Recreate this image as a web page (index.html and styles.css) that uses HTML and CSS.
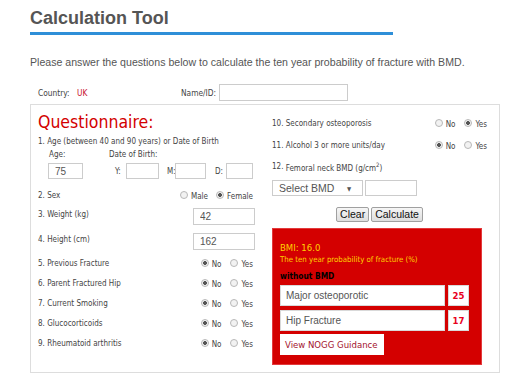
FILE: index.html
```html
<!DOCTYPE html>
<html lang="en">
<head>
    <meta charset="UTF-8">
    <meta name="viewport" content="width=device-width, initial-scale=1.0">
    <title>Calculation Tool</title>
    <link rel="stylesheet" href="styles.css">
</head>
<body>
    <div class="page">
        <h1 class="title">Calculation Tool</h1>
        <p class="intro">Please answer the questions below to calculate the ten year probability of fracture with BMD.</p>

        <div class="country-row">
            <div class="country">Country: <span class="country-name">UK</span></div>
            <label class="name-label" for="nameId">Name/ID:</label>
            <input type="text" id="nameId" class="inp name-input">
        </div>

        <div class="form-box">
            <div class="col-left">
                <h2 class="questionnaire">Questionnaire:</h2>
                <div class="q-age">1. Age (between 40 and 90 years) or Date of Birth</div>
                <div class="dob-labels">
                    <span class="age-lbl">Age:</span>
                    <span>Date of Birth:</span>
                </div>
                <div class="dob-inputs">
                    <input class="inp inp-age" value="75">
                    <span class="dob-l dob-y">Y:</span><input class="inp inp-y">
                    <span class="dob-l dob-m">M:</span><input class="inp inp-m">
                    <span class="dob-l dob-d">D:</span><input class="inp inp-d">
                </div>

                <div class="q-row q-sex">
                    <span>2. Sex</span>
                    <span class="radios sex">
                        <label class="radio"><input type="radio" name="sex">Male</label>
                        <label class="radio"><input type="radio" name="sex" checked>Female</label>
                    </span>
                </div>
                <div class="q-row q-field q-weight">
                    <span class="q-label">3. Weight (kg)</span>
                    <input class="inp inp-num" value="42">
                </div>
                <div class="q-row q-field q-height">
                    <span class="q-label">4. Height (cm)</span>
                    <input class="inp inp-num" value="162">
                </div>
                <div class="q-row">
                    <span>5. Previous Fracture</span>
                    <span class="radios yn">
                        <label class="radio"><input type="radio" name="q5" checked>No</label>
                        <label class="radio"><input type="radio" name="q5">Yes</label>
                    </span>
                </div>
                <div class="q-row">
                    <span>6. Parent Fractured Hip</span>
                    <span class="radios yn">
                        <label class="radio"><input type="radio" name="q6" checked>No</label>
                        <label class="radio"><input type="radio" name="q6">Yes</label>
                    </span>
                </div>
                <div class="q-row">
                    <span>7. Current Smoking</span>
                    <span class="radios yn">
                        <label class="radio"><input type="radio" name="q7" checked>No</label>
                        <label class="radio"><input type="radio" name="q7">Yes</label>
                    </span>
                </div>
                <div class="q-row">
                    <span>8. Glucocorticoids</span>
                    <span class="radios yn">
                        <label class="radio"><input type="radio" name="q8" checked>No</label>
                        <label class="radio"><input type="radio" name="q8">Yes</label>
                    </span>
                </div>
                <div class="q-row">
                    <span>9. Rheumatoid arthritis</span>
                    <span class="radios yn">
                        <label class="radio"><input type="radio" name="q9" checked>No</label>
                        <label class="radio"><input type="radio" name="q9">Yes</label>
                    </span>
                </div>
            </div>

            <div class="col-right">
                <div class="q-row r-row">
                    <span>10. Secondary osteoporosis</span>
                    <span class="radios yn">
                        <label class="radio"><input type="radio" name="q10">No</label>
                        <label class="radio"><input type="radio" name="q10" checked>Yes</label>
                    </span>
                </div>
                <div class="q-row r-row">
                    <span>11. Alcohol 3 or more units/day</span>
                    <span class="radios yn">
                        <label class="radio"><input type="radio" name="q11" checked>No</label>
                        <label class="radio"><input type="radio" name="q11">Yes</label>
                    </span>
                </div>
                <div class="q-row r-row q-bmd">
                    <span><span class="num-up">12.</span> Femoral neck BMD (g/cm<sup>2</sup>)</span>
                </div>
                <div class="bmd-row">
                    <div class="select-wrap">
                        <select class="bmd-select">
                            <option>Select BMD</option>
                        </select>
                    </div>
                    <input class="inp inp-bmd">
                </div>
                <div class="buttons">
                    <button class="btn">Clear</button>
                    <button class="btn">Calculate</button>
                </div>

                <div class="result">
                    <div class="bmi">BMI: 16.0</div>
                    <div class="prob">The ten year probability of fracture (%)</div>
                    <div class="without">without BMD</div>
                    <div class="res-row">
                        <div class="res-label">Major osteoporotic</div>
                        <div class="res-value">25</div>
                    </div>
                    <div class="res-row">
                        <div class="res-label">Hip Fracture</div>
                        <div class="res-value">17</div>
                    </div>
                    <a class="nogg" href="#">View NOGG Guidance</a>
                </div>
            </div>
        </div>
    </div>
</body>
</html>
```

FILE: styles.css
```css
body {
    margin: 0;
    background: #fff;
    font-family: "DejaVu Sans Condensed", "DejaVu Sans", sans-serif;
    font-size: 8px;
    color: #444;
}
.page {
    padding-left: 30px;
    width: 470px;
}
.title {
    margin: 0;
    padding-top: 8px;
    padding-bottom: 4px;
    width: 363px;
    border-bottom: 3px solid #2e8fd8;
    font-family: "Liberation Sans", Arial, sans-serif;
    font-size: 18px;
    line-height: 20px;
    color: #555;
}
.intro {
    margin: 21px 0 0;
    font-family: "Liberation Sans", Arial, sans-serif;
    font-size: 10.6px;
    line-height: 13px;
    color: #555;
}
.country-row {
    display: flex;
    align-items: center;
    height: 21px;
    margin-top: 13px;
    padding-left: 8px;
    font-size: 8.3px;
}
.country {
    width: 143px;
}
.country-name {
    margin-left: 5px;
    color: #c8102e;
}
.name-label {
    margin-right: 3px;
}
.inp {
    box-sizing: border-box;
    height: 16px;
    margin: 0;
    padding: 0 0 0 6px;
    border: 1px solid #ccc;
    background: #fff;
    font-family: "Liberation Sans", Arial, sans-serif;
    font-size: 10px;
    color: #555;
}
.name-input {
    width: 129px;
    height: 17px;
}

.form-box {
    box-sizing: border-box;
    height: 269px;
    margin-top: 1px;
    padding: 0 7px;
    border: 1px solid #ddd;
    display: grid;
    grid-template-columns: 217px 215px;
    column-gap: 17px;
}
.col-left {
    padding-top: 7px;
}
.questionnaire {
    margin: 0;
    height: 21px;
    font-size: 17.5px;
    line-height: 20px;
    font-weight: normal;
    color: #d30000;
}
.q-age {
    height: 17px;
    line-height: 17px;
}
.dob-labels {
    display: flex;
    height: 10px;
    line-height: 10px;
    padding-left: 11px;
}
.age-lbl {
    width: 60px;
}
.dob-inputs {
    display: flex;
    align-items: center;
    margin-top: 3px;
    padding-left: 10px;
}
.inp-age { width: 35px; }
.inp-y { width: 33px; }
.inp-m { width: 31px; }
.inp-d { width: 27px; }
.dob-y { margin-left: 32px; width: 11px; }
.dob-m { margin-left: 8px; width: 8px; }
.dob-d { margin-left: 9px; width: 11px; }

.q-row {
    display: flex;
    align-items: center;
    justify-content: space-between;
    height: 20px;
}
.q-sex {
    height: 18px;
    margin-top: 7px;
}
.q-weight {
    height: 25px;
}
.q-height {
    height: 24px;
}
.q-field .q-label {
    padding-bottom: 4px;
}
.inp-num {
    width: 62px;
    height: 17px;
}
.radios {
    display: flex;
    align-items: center;
    margin-right: 2px;
}
.radio {
    display: flex;
    align-items: center;
    margin-left: 5px;
    font-size: 8px;
    padding-top: 2px;
}
.yn .radio + .radio {
    margin-left: 9px;
}
.sex .radio + .radio {
    margin-left: 8px;
}
.radio input {
    -webkit-appearance: none;
    appearance: none;
    box-sizing: border-box;
    width: 8px;
    height: 8px;
    margin: -2px 3px 0 0;
    border: 1px solid #b8b8b8;
    border-radius: 50%;
    background: #f2f2f2;
}
.radio input:checked {
    background: radial-gradient(circle, #555 0 1.6px, #f2f2f2 2.2px);
}

.col-right {
    padding-top: 9px;
}
.r-row {
    height: 18px;
    margin-bottom: 4px;
}
.r-row .radios {
    margin-right: 0;
}
.num-up {
    position: relative;
    top: -2px;
}
.q-bmd sup {
    font-size: 6px;
    vertical-align: 4px;
}
.bmd-row {
    display: flex;
    align-items: center;
    gap: 2px;
    margin-top: 2px;
}
.select-wrap {
    position: relative;
}
.select-wrap::after {
    content: "\25BC";
    position: absolute;
    top: 5px;
    left: 75px;
    font-size: 6px;
    color: #555;
    pointer-events: none;
}
.bmd-select {
    -webkit-appearance: none;
    appearance: none;
    box-sizing: border-box;
    width: 91px;
    height: 16px;
    margin: 0;
    padding: 0 0 0 6px;
    border: 1px solid #ccc;
    border-radius: 0;
    background: #fff;
    font-family: "Liberation Sans", Arial, sans-serif;
    font-size: 10.5px;
    color: #555;
}
.inp-bmd {
    width: 52px;
}
.buttons {
    display: flex;
    justify-content: center;
    gap: 2px;
    margin-top: 11px;
}
.btn {
    height: 15px;
    padding: 0 3px;
    border: 1px solid #a0a0a0;
    border-radius: 2px;
    background: linear-gradient(#f6f6f6, #dedede);
    font-family: "Liberation Sans", Arial, sans-serif;
    font-size: 10.5px;
    line-height: 13px;
    color: #111;
}

.result {
    box-sizing: border-box;
    width: 210px;
    height: 137px;
    margin-top: 6px;
    padding: 13px 7px 0;
    border: 1px solid #e3393c;
    background: #d40000;
}
.bmi {
    height: 12px;
    line-height: 12px;
    font-size: 9.5px;
    color: #ffd200;
}
.prob {
    height: 12px;
    line-height: 12px;
    font-size: 7.8px;
    color: #ffd200;
}
.without {
    margin-top: 4px;
    height: 12px;
    line-height: 12px;
    font-size: 8.3px;
    font-weight: bold;
    color: #000;
}
.res-row {
    display: flex;
    gap: 3px;
    margin-top: 3px;
}
.res-row + .res-row {
    margin-top: 4px;
}
.res-label,
.res-value {
    box-sizing: border-box;
    height: 21px;
    line-height: 19px;
    border: 1px solid #d9d9d9;
    background: #fff;
}
.res-label {
    width: 165px;
    padding-left: 5px;
    font-family: "Liberation Sans", Arial, sans-serif;
    font-size: 10px;
    color: #555;
}
.res-value {
    width: 21px;
    text-align: center;
    font-size: 9.5px;
    font-weight: bold;
    color: #e8001c;
}
.nogg {
    display: inline-block;
    box-sizing: border-box;
    width: 104px;
    height: 21px;
    margin-top: 3px;
    padding-left: 5px;
    line-height: 21px;
    background: #fff;
    font-size: 9.5px;
    color: #a3122e;
    text-decoration: none;
}
```
